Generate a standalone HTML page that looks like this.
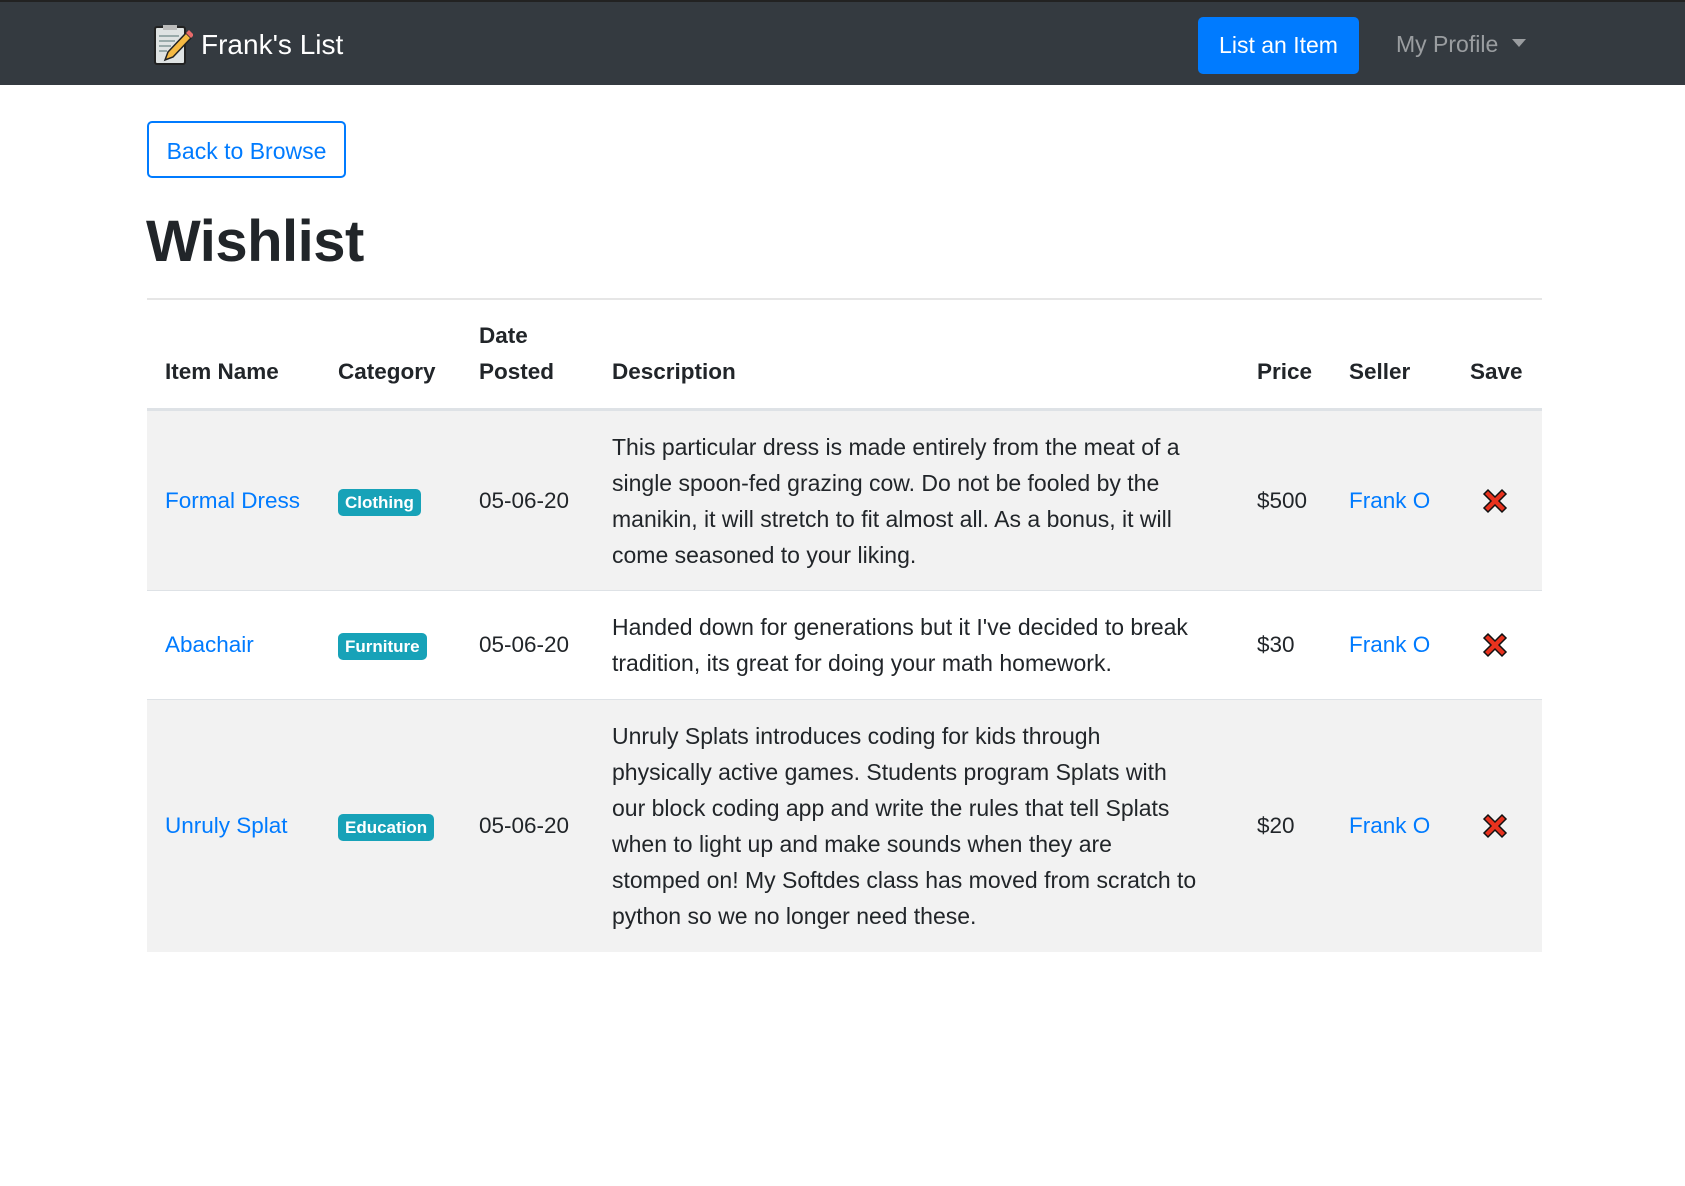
<!DOCTYPE html>
<html><head><meta charset="utf-8"><style>
*{box-sizing:border-box;margin:0;padding:0}
body{width:1685px;height:1186px;background:#fff;font-family:"Liberation Sans",sans-serif;color:#212529;overflow:hidden}
.nav{height:85px;background:#343a40;border-top:2px solid #222;position:relative}
.brand{position:absolute;left:153px;top:22px;color:#fff;font-size:28px;display:flex;align-items:center}
.brand svg{margin-right:8px}
.btn1{position:absolute;left:1198px;top:15px;width:161px;height:57px;background:#007bff;color:#fff;border-radius:5px;font-size:23px;line-height:57px;text-align:center}
.prof{position:absolute;left:1396px;top:29px;color:rgba(255,255,255,.5);font-size:23px}
.prof:after{content:"";display:inline-block;margin-left:14px;vertical-align:5px;border-top:8px solid rgba(255,255,255,.5);border-left:7px solid transparent;border-right:7px solid transparent}
.back{position:absolute;left:147px;top:121px;width:199px;height:57px;border:2px solid #007bff;border-radius:5px;color:#007bff;font-size:23px;line-height:57px;text-align:center}
h1{position:absolute;left:146px;top:208px;font-size:58px;font-weight:bold;letter-spacing:-.5px}
.hr{position:absolute;left:147px;top:298px;width:1395px;border-top:2px solid #e6e6e6}
table{position:absolute;left:147px;top:318px;width:1395px;border-collapse:collapse;table-layout:fixed;font-size:22.5px}
th{text-align:left;vertical-align:bottom;padding:0 0 18px 18px;font-weight:bold;line-height:36px;border-bottom:3px solid #dee2e6}
td{padding:0 0 0 18px;vertical-align:middle;line-height:36px;white-space:nowrap}
td.d{font-size:23px}
tr.g td{background:#f2f2f2}
tr.b td{border-bottom:1px solid #dee2e6}
a{color:#007bff;text-decoration:none}
.bd{display:inline-block;background:#17a2b8;color:#fff;font-size:17px;font-weight:bold;padding:2px 7px;border-radius:5px;line-height:23px}
td svg{display:block;margin-left:12px}
</style></head><body>
<div class="nav">
<div class="brand"><svg width="40" height="42" viewBox="0 0 40 42"><rect x="2" y="3" width="30" height="37" rx="2" fill="#dfe3e3" stroke="#222" stroke-width="2"/><rect x="10" y="1" width="14" height="5" fill="#bbb"/><g stroke="#9aa" stroke-width="2"><line x1="6" y1="12" x2="26" y2="12"/><line x1="6" y1="17" x2="22" y2="17"/><line x1="6" y1="22" x2="18" y2="22"/><line x1="6" y1="27" x2="14" y2="27"/></g><path d="M12 36 L15 28 L33 9 L38 14 L20 33 Z" fill="#f5b942" stroke="#222" stroke-width="1.5"/><path d="M33 9 L36 6 L41 11 L38 14Z" fill="#e86a6a"/></svg>Frank's List</div>
<div class="btn1">List an Item</div>
<div class="prof">My Profile</div>
</div>
<div class="back">Back to Browse</div>
<h1>Wishlist</h1>
<div class="hr"></div>
<table>
<colgroup><col style="width:173px"><col style="width:141px"><col style="width:133px"><col style="width:645px"><col style="width:92px"><col style="width:121px"><col style="width:90px"></colgroup>
<tr><th>Item Name</th><th>Category</th><th>Date<br>Posted</th><th>Description</th><th>Price</th><th>Seller</th><th>Save</th></tr>
<tr class="g b" style="height:181px"><td><a>Formal Dress</a></td><td><span class="bd">Clothing</span></td><td>05-06-20</td><td class="d">This particular dress is made entirely from the meat of a<br>single spoon-fed grazing cow. Do not be fooled by the<br>manikin, it will stretch to fit almost all. As a bonus, it will<br>come seasoned to your liking.</td><td>$500</td><td><a>Frank O</a></td><td><svg width="26" height="26" viewBox="0 0 26 26"><path d="M2 6 L6 2 L13 9 L20 2 L24 6 L17 13 L24 20 L20 24 L13 17 L6 24 L2 20 L9 13Z" fill="#e8321e" stroke="#111" stroke-width="1.5"/></svg></td></tr>
<tr class="b" style="height:109px"><td><a>Abachair</a></td><td><span class="bd">Furniture</span></td><td>05-06-20</td><td class="d">Handed down for generations but it I've decided to break<br>tradition, its great for doing your math homework.</td><td>$30</td><td><a>Frank O</a></td><td><svg width="26" height="26" viewBox="0 0 26 26"><path d="M2 6 L6 2 L13 9 L20 2 L24 6 L17 13 L24 20 L20 24 L13 17 L6 24 L2 20 L9 13Z" fill="#e8321e" stroke="#111" stroke-width="1.5"/></svg></td></tr>
<tr class="g" style="height:252px"><td><a>Unruly Splat</a></td><td><span class="bd">Education</span></td><td>05-06-20</td><td class="d">Unruly Splats introduces coding for kids through<br>physically active games. Students program Splats with<br>our block coding app and write the rules that tell Splats<br>when to light up and make sounds when they are<br>stomped on! My Softdes class has moved from scratch to<br>python so we no longer need these.</td><td>$20</td><td><a>Frank O</a></td><td><svg width="26" height="26" viewBox="0 0 26 26"><path d="M2 6 L6 2 L13 9 L20 2 L24 6 L17 13 L24 20 L20 24 L13 17 L6 24 L2 20 L9 13Z" fill="#e8321e" stroke="#111" stroke-width="1.5"/></svg></td></tr>
</table>
</body></html>
